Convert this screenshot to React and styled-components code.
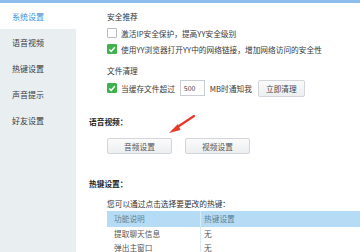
import React from "react";
import styled, { createGlobalStyle } from "styled-components";

const GlobalStyle = createGlobalStyle`
  html, body {
    margin: 0;
    padding: 0;
    background: #fff;
  }
  body {
    font-family: "Noto Sans CJK SC", "Liberation Sans", sans-serif;
  }
`;

const menuList = ["系统设置", "语音视频", "热键设置", "声音提示", "好友设置"];

const hotkeyList = [
  { name: "提取聊天信息", key: "无" },
  { name: "弹出主窗口", key: "无" },
];

const CheckIcon = ({ checked }) => (
  <Box checked={checked}>
    {checked && (
      <svg width="9" height="9" viewBox="0 0 9 9">
        <path d="M1.5 4.6 L3.6 6.8 L7.6 2" fill="none" stroke="#fff" strokeWidth="1.6" />
      </svg>
    )}
  </Box>
);

const App = () => {
  return (
    <Window>
      <GlobalStyle />
      <TopStrip />
      <Body>
        <Sidebar>
          {menuList.map((item, index) => (
            <MenuItem key={index} active={index === 0}>
              {item}
            </MenuItem>
          ))}
        </Sidebar>
        <Content>
          <Group>
            <SubTitle>安全推荐</SubTitle>
            <CheckRow>
              <CheckIcon checked={false} />
              <Label>激活IP安全保护，提高YY安全级别</Label>
            </CheckRow>
            <CheckRow>
              <CheckIcon checked />
              <Label>使用YY浏览器打开YY中的网络链接，增加网络访问的安全性</Label>
            </CheckRow>
            <SubTitle top={6}>文件清理</SubTitle>
            <CheckRow tall>
              <CheckIcon checked />
              <Label>当缓存文件超过</Label>
              <NumInput>500</NumInput>
              <Label>MB时通知我</Label>
              <SmallButton>立即清理</SmallButton>
            </CheckRow>
          </Group>

          <Heading top={17}>语音视频：</Heading>
          <ButtonRow>
            <WideButton>音频设置</WideButton>
            <WideButton>视频设置</WideButton>
          </ButtonRow>

          <Heading top={22}>热键设置：</Heading>
          <Group>
            <Hint>您可以通过点击选择要更改的热键：</Hint>
            <Table>
              <HeadRow>
                <Cell first>功能说明</Cell>
                <Cell>热键设置</Cell>
              </HeadRow>
              {hotkeyList.map((row, index) => (
                <Row key={index}>
                  <Cell first>{row.name}</Cell>
                  <Cell>{row.key}</Cell>
                </Row>
              ))}
            </Table>
          </Group>

          <Arrow width="30" height="24" viewBox="0 0 30 24">
            <path d="M27 1 L9 13" stroke="#e8392b" strokeWidth="2.2" strokeLinecap="round" />
            <path d="M2 18 L11 9 L13.5 15 Z" fill="#e8392b" />
          </Arrow>
        </Content>
      </Body>
    </Window>
  );
};

const Window = styled.div`
  width: 360px;
  height: 252px;
  overflow: hidden;
  display: flex;
  flex-direction: column;
  background: #fff;
  color: #3a3a3a;
  font-size: 7.7px;
`;

const TopStrip = styled.div`
  height: 3px;
  flex: none;
  background: #8cbdec;
`;

const Body = styled.div`
  flex: 1;
  display: flex;
`;

const Sidebar = styled.nav`
  width: 76px;
  flex: none;
  background: #e9eef1;
  display: flex;
  flex-direction: column;
`;

const MenuItem = styled.div`
  height: 26px;
  display: flex;
  align-items: center;
  padding-left: 12px;
  font-size: 8px;
  background: ${({ active }) => (active ? "#fff" : "transparent")};
  color: ${({ active }) => (active ? "#3b8fdb" : "#3a3a3a")};
`;

const Content = styled.div`
  position: relative;
  flex: 1;
  display: flex;
  flex-direction: column;
  padding-left: 13px;
  padding-top: 6px;
`;

const Group = styled.div`
  display: flex;
  flex-direction: column;
  padding-left: 18px;
`;

const SubTitle = styled.div`
  height: 16px;
  line-height: 16px;
  margin-top: ${({ top }) => top || 0}px;
  color: #333;
`;

const Heading = styled.div`
  height: 16px;
  line-height: 16px;
  margin-top: ${({ top }) => top || 0}px;
  font-weight: 700;
  color: #222;
`;

const CheckRow = styled.div`
  height: ${({ tall }) => (tall ? 18 : 16)}px;
  display: flex;
  align-items: center;
  gap: 4px;
`;

const Box = styled.span`
  width: 10px;
  height: 10px;
  box-sizing: border-box;
  display: flex;
  align-items: center;
  justify-content: center;
  border-radius: 1px;
  background: ${({ checked }) => (checked ? "#3fb24e" : "#fff")};
  border: 1px solid ${({ checked }) => (checked ? "#3fb24e" : "#b8bec4")};
`;

const Label = styled.span`
  color: #3a3a3a;
  white-space: nowrap;
`;

const NumInput = styled.div`
  width: 25px;
  height: 16px;
  box-sizing: border-box;
  border: 1px solid #c9ced3;
  padding-left: 3px;
  font-size: 7px;
  line-height: 14px;
  margin: 0 1px 0 1px;
  color: #444;
`;

const SmallButton = styled.div`
  margin-left: 2px;
  width: 47px;
  height: 17px;
  box-sizing: border-box;
  border: 1px solid #d2d6da;
  border-radius: 2px;
  background: linear-gradient(#fafafa, #eceef0);
  display: flex;
  align-items: center;
  justify-content: center;
  color: #444;
`;

const ButtonRow = styled.div`
  display: flex;
  gap: 13px;
  margin-top: 8px;
  padding-left: 18px;
`;

const WideButton = styled.div`
  width: 65px;
  height: 16px;
  box-sizing: border-box;
  border: 1px solid #d2d6da;
  border-radius: 2px;
  background: linear-gradient(#fbfbfb, #eceef0);
  display: flex;
  align-items: center;
  justify-content: center;
  color: #555;
`;

const Hint = styled.div`
  height: 14px;
  line-height: 14px;
  margin-top: 5px;
  color: #333;
`;

const Table = styled.div`
  width: 280px;
  display: flex;
  flex-direction: column;
`;

const HeadRow = styled.div`
  height: 16px;
  display: flex;
  background: #b5dcf4;
  color: #5d7f96;
`;

const Row = styled.div`
  height: 14px;
  display: flex;
  color: #555;
  background: #fff;
`;

const Cell = styled.div`
  width: ${({ first }) => (first ? "94px" : "auto")};
  flex: ${({ first }) => (first ? "none" : 1)};
  box-sizing: border-box;
  padding-left: ${({ first }) => (first ? 7 : 3)}px;
  display: flex;
  align-items: center;
  line-height: 1;
  border-right: ${({ first }) => (first ? "1px solid #d6ebf8" : "none")};
`;

const Arrow = styled.svg`
  position: absolute;
  left: 91px;
  top: 112px;
`;

export default App;
